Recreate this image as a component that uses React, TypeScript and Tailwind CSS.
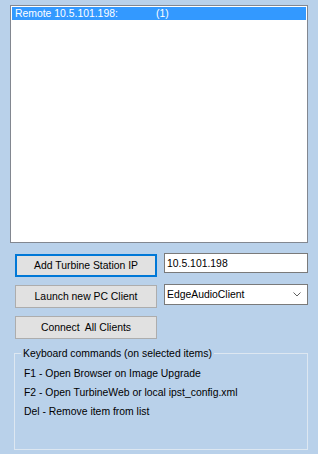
import React from 'react'

const font = { fontFamily: '"Liberation Sans", Arial, sans-serif' }

const Button = ({ label, focused }: { label: string; focused?: boolean }) => (
    <button
        type="button"
        className={
            focused
                ? 'mt-px flex h-[23px] w-[142px] shrink-0 items-center justify-center whitespace-pre border-2 border-[#0078d7] bg-[#e1e1e1] text-[10.4px] text-black'
                : 'mt-px flex h-[23px] w-[142px] shrink-0 items-center justify-center whitespace-pre border border-[#adadad] bg-[#e1e1e1] text-[10.4px] text-black'
        }
    >
        {label}
    </button>
)

export default function App() {
    return (
        <div className="flex h-[454px] w-[318px] flex-col bg-[#b9d1ea] text-[10.4px] leading-[13px] text-black" style={font}>
            <div className="ml-[10px] mt-[5px] h-[238px] w-[298px] border border-[#828790] bg-white p-px">
                <div className="flex h-[13px] items-center bg-[#3399ff] pl-[3px] text-white">
                    <span className="inline-block w-[141px]">Remote 10.5.101.198:</span>
                    <span>(1)</span>
                </div>
            </div>

            <div className="mt-[10px] flex items-start">
                <div className="ml-[15px]">
                    <Button label="Add Turbine Station IP" focused />
                </div>
                <div className="ml-[7px] flex h-[20px] w-[144px] items-center border border-[#7a7a7a] bg-white pl-[2px]">
                    10.5.101.198
                </div>
            </div>

            <div className="mt-[7px] flex items-start">
                <div className="ml-[15px]">
                    <Button label="Launch new PC Client" />
                </div>
                <div className="ml-[7px] flex h-[21px] w-[144px] items-center justify-between border border-[#7a7a7a] bg-white pl-[2px] pr-[6px]">
                    <span>EdgeAudioClient</span>
                    <svg width="8" height="5" viewBox="0 0 8 5" fill="none">
                        <path d="M0.5 0.5 L4 4 L7.5 0.5" stroke="#606060" strokeWidth="1" />
                    </svg>
                </div>
            </div>

            <div className="mt-[7px] ml-[15px]">
                <Button label="Connect  All Clients" />
            </div>

            <div className="relative ml-[14px] mt-[14px] h-[97px] w-[294px] border border-[#dde7f1]">
                <span className="absolute left-[6px] top-[-7px] bg-[#b9d1ea] px-[2px]">
                    Keyboard commands (on selected items)
                </span>
                <div className="flex flex-col gap-[6px] pl-[9px] pt-[13px]">
                    <div>F1 - Open Browser on Image Upgrade</div>
                    <div>F2 - Open TurbineWeb or local ipst_config.xml</div>
                    <div>Del - Remove item from list</div>
                </div>
            </div>
        </div>
    )
}
